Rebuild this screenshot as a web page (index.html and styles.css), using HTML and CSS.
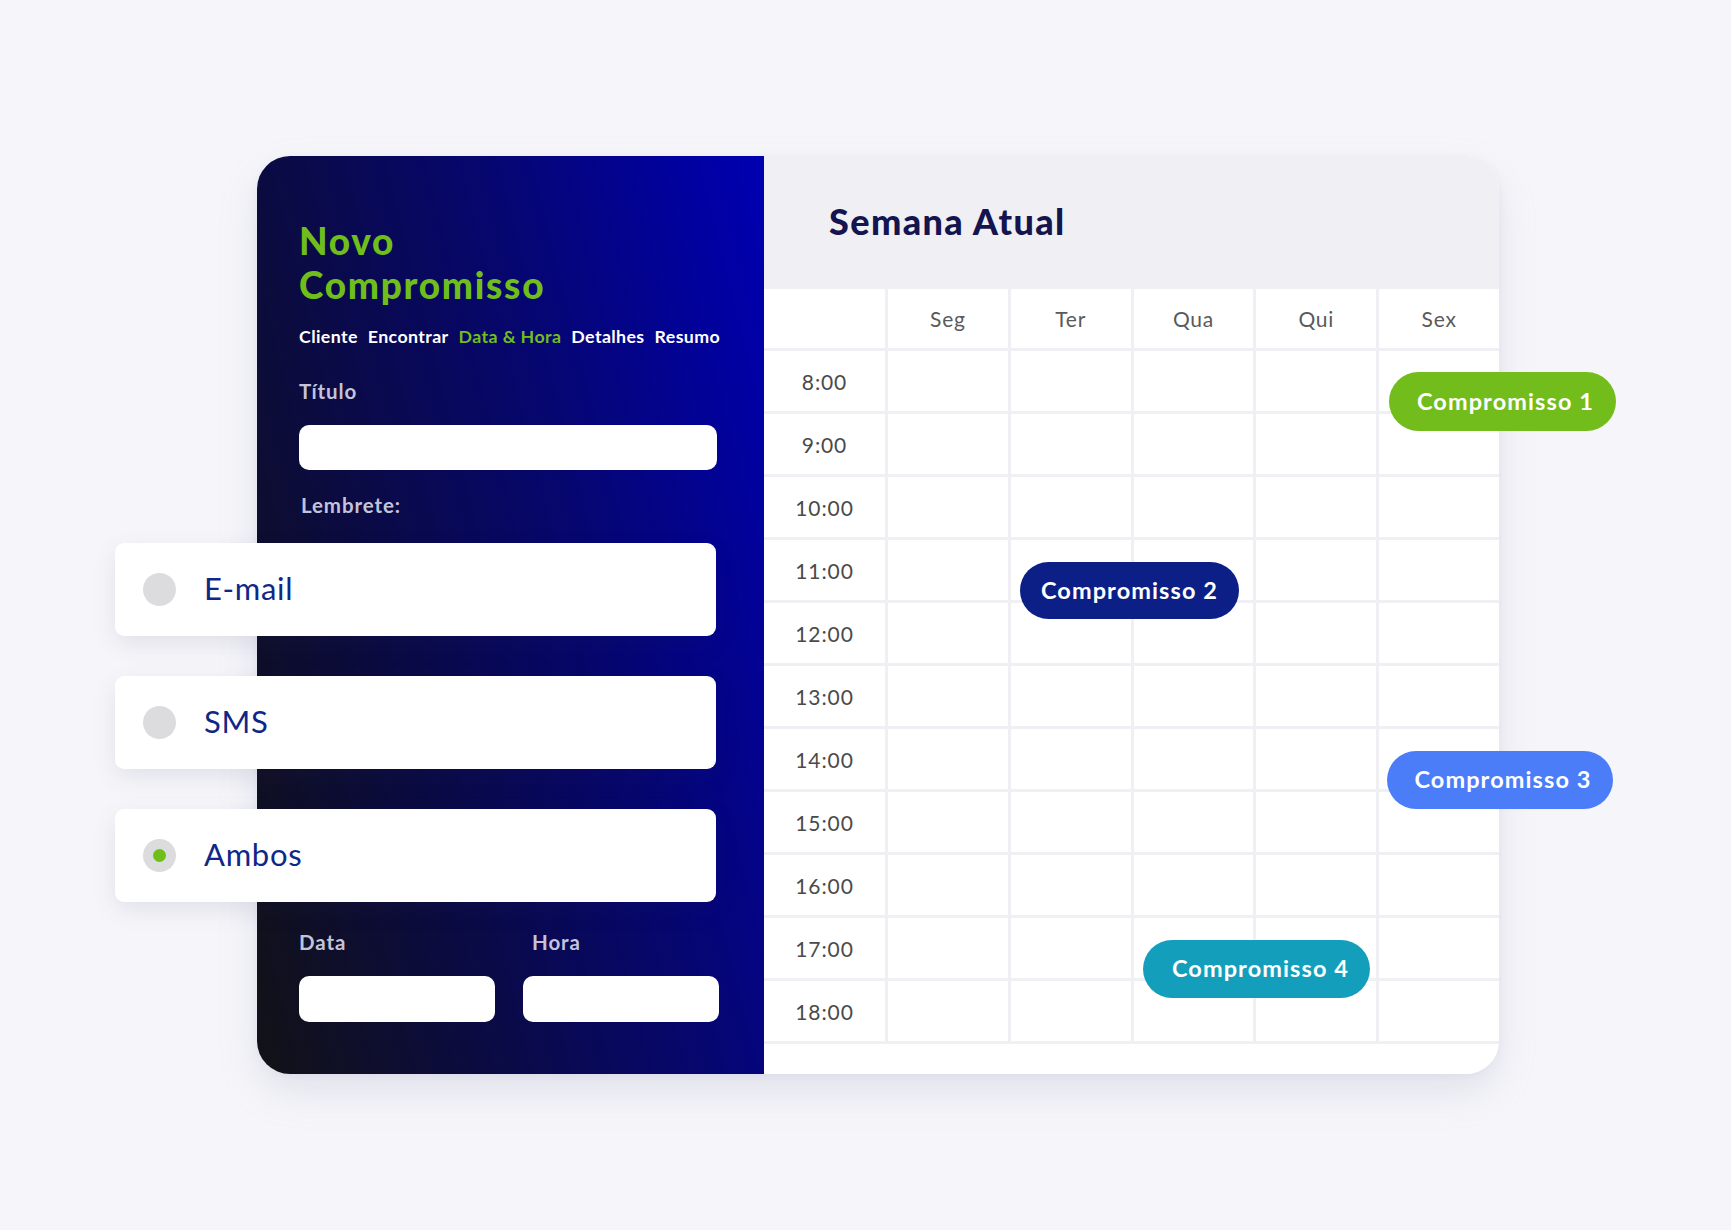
FILE: index.html
```html
<!DOCTYPE html>
<html lang="pt">
<head>
<meta charset="utf-8">
<title>Novo Compromisso</title>
<link rel="stylesheet" href="styles.css">
</head>
<body>
<div class="stage">
  <div class="card">
    <section class="form-panel">
      <h1 class="form-title">Novo<br>Compromisso</h1>
      <nav class="steps">
        <span>Cliente</span>
        <span>Encontrar</span>
        <span class="active">Data &amp; Hora</span>
        <span>Detalhes</span>
        <span>Resumo</span>
      </nav>
      <div class="label title-label">Título</div>
      <div class="input wide"></div>
      <div class="label reminder">Lembrete:</div>
      <div class="options">
        <div class="option"><span class="radio"></span><span class="option-text">E-mail</span></div>
        <div class="option"><span class="radio"></span><span class="option-text">SMS</span></div>
        <div class="option"><span class="radio checked"></span><span class="option-text">Ambos</span></div>
      </div>
      <div class="date-row">
        <div class="field">
          <div class="label">Data</div>
          <div class="input"></div>
        </div>
        <div class="field">
          <div class="label hora">Hora</div>
          <div class="input"></div>
        </div>
      </div>
    </section>
    <section class="week-panel">
      <header class="week-header">
        <h2>Semana Atual</h2>
      </header>
      <div class="grid-wrap">
        <div class="grid">
          <div class="cell"></div>
          <div class="cell day">Seg</div>
          <div class="cell day">Ter</div>
          <div class="cell day">Qua</div>
          <div class="cell day">Qui</div>
          <div class="cell day">Sex</div>

          <div class="cell time">8:00</div><div class="cell"></div><div class="cell"></div><div class="cell"></div><div class="cell"></div><div class="cell"></div>
          <div class="cell time">9:00</div><div class="cell"></div><div class="cell"></div><div class="cell"></div><div class="cell"></div><div class="cell"></div>
          <div class="cell time">10:00</div><div class="cell"></div><div class="cell"></div><div class="cell"></div><div class="cell"></div><div class="cell"></div>
          <div class="cell time">11:00</div><div class="cell"></div><div class="cell"></div><div class="cell"></div><div class="cell"></div><div class="cell"></div>
          <div class="cell time">12:00</div><div class="cell"></div><div class="cell"></div><div class="cell"></div><div class="cell"></div><div class="cell"></div>
          <div class="cell time">13:00</div><div class="cell"></div><div class="cell"></div><div class="cell"></div><div class="cell"></div><div class="cell"></div>
          <div class="cell time">14:00</div><div class="cell"></div><div class="cell"></div><div class="cell"></div><div class="cell"></div><div class="cell"></div>
          <div class="cell time">15:00</div><div class="cell"></div><div class="cell"></div><div class="cell"></div><div class="cell"></div><div class="cell"></div>
          <div class="cell time">16:00</div><div class="cell"></div><div class="cell"></div><div class="cell"></div><div class="cell"></div><div class="cell"></div>
          <div class="cell time">17:00</div><div class="cell"></div><div class="cell"></div><div class="cell"></div><div class="cell"></div><div class="cell"></div>
          <div class="cell time">18:00</div><div class="cell"></div><div class="cell"></div><div class="cell"></div><div class="cell"></div><div class="cell"></div>
        </div>
      </div>
      <div class="pill p1">Compromisso 1</div>
      <div class="pill p2">Compromisso 2</div>
      <div class="pill p3">Compromisso 3</div>
      <div class="pill p4">Compromisso 4</div>
    </section>
  </div>
</div>
</body>
</html>
```

FILE: styles.css
```css
* { box-sizing: border-box; }
html, body { margin: 0; padding: 0; }
body {
  background: #f6f6fa;
  font-family: "Lato", "Open Sans", sans-serif;
  width: 1731px;
  height: 1230px;
  overflow: hidden;
}
.stage {
  padding: 156px 0 0 257px;
}
.card {
  display: flex;
  width: 1242px;
  height: 918px;
  border-radius: 33px;
  box-shadow: 0 18px 40px rgba(120, 120, 170, 0.16), 0 2px 8px rgba(120, 120, 170, 0.06);
}

/* ---------- Left form panel ---------- */
.form-panel {
  width: 507px;
  flex: none;
  border-radius: 33px 0 0 33px;
  background: linear-gradient(76deg, #121216 0%, #0b0b40 30%, #060670 62%, #0101a2 90%, #0000b2 100%);
  padding: 63px 42px 0 42px;
  display: flex;
  flex-direction: column;
}
.form-title {
  margin: 0;
  color: #6fbe1c;
  font-family: "Lato", sans-serif;
  font-weight: 900;
  font-size: 37px;
  line-height: 44px;
  letter-spacing: 1.7px;
}
.steps {
  margin-top: 18px;
  display: flex;
  gap: 10px;
  font-size: 17.8px;
  line-height: 22px;
  font-weight: 700;
  color: #ffffff;
  letter-spacing: 0.38px;
  white-space: nowrap;
}
.steps span { flex: none; }
.steps .active { color: #6fbe1c; }
.label {
  color: #c3c3da;
  font-size: 20.5px;
  line-height: 22px;
  font-weight: 700;
  letter-spacing: 0.9px;
}
.title-label { margin-top: 33px; }
.input {
  background: #ffffff;
  border-radius: 10px;
  height: 46px;
  margin-top: 23px;
}
.input.wide { width: 418px; height: 45px; }
.label.reminder {
  margin-top: 24px;
  margin-left: 2px;
}
.options {
  margin-top: 27px;
  margin-left: -184px;
  width: 601px;
  display: flex;
  flex-direction: column;
  gap: 40px;
}
.option {
  height: 93px;
  background: #ffffff;
  border-radius: 9px;
  display: flex;
  align-items: center;
  padding-left: 28px;
  box-shadow: 0 8px 24px rgba(40, 40, 90, 0.10);
}
.radio {
  width: 33px;
  height: 33px;
  border-radius: 50%;
  background: #dcdcde;
  display: flex;
  align-items: center;
  justify-content: center;
  flex: none;
}
.radio.checked::after {
  content: "";
  width: 13px;
  height: 13px;
  border-radius: 50%;
  background: #6fbe1c;
}
.option-text {
  margin-left: 28px;
  margin-top: -3px;
  color: #0f2788;
  font-size: 31px;
  font-weight: 400;
  letter-spacing: 0.7px;
}
.date-row {
  margin-top: 29px;
  display: flex;
  gap: 28px;
}
.field { width: 196px; }
.label.hora { margin-left: 9px; }

/* ---------- Right week panel ---------- */
.week-panel {
  position: relative;
  width: 735px;
  flex: none;
  background: #ffffff;
  border-radius: 0 33px 33px 0;
}
.week-header {
  height: 133px;
  background: #efeff4;
  border-radius: 0 33px 0 0;
  padding-left: 65px;
  display: flex;
  align-items: center;
}
.week-header h2 {
  margin: 0;
  padding-bottom: 4px;
  font-size: 36px;
  font-weight: 900;
  color: #14144e;
  letter-spacing: 1.4px;
}
.grid-wrap {
  padding-bottom: 3px;
  background: #efeff4;
}
.grid {
  display: grid;
  grid-template-columns: 121px repeat(5, 1fr);
  grid-template-rows: 59px repeat(11, 60px);
  gap: 3px;
  background: #efeff4;
}
.cell {
  background: #ffffff;
  display: flex;
  align-items: center;
  justify-content: center;
  color: #505050;
  font-size: 21px;
}
.cell.day { color: #5a5a5a; letter-spacing: 0.8px; }
.cell.time { color: #4a4a4a; letter-spacing: 0.9px; }

.pill {
  position: absolute;
  border-radius: 30px;
  color: #ffffff;
  font-size: 23.5px;
  font-weight: 700;
  display: flex;
  align-items: center;
  justify-content: center;
  letter-spacing: 1.1px;
  padding-bottom: 2px;
}
.p1 { left: 625px; top: 216px; width: 227px; height: 59px; background: #72bd1b; padding-left: 6px; }
.p2 { left: 256px; top: 406px; width: 219px; height: 57px; background: #0b1f86; }
.p3 { left: 623px; top: 595px; width: 226px; height: 58px; background: #4a7df7; padding-left: 6px; }
.p4 { left: 379px; top: 784px; width: 227px; height: 58px; background: #139fbb; padding-left: 8px; }
```
